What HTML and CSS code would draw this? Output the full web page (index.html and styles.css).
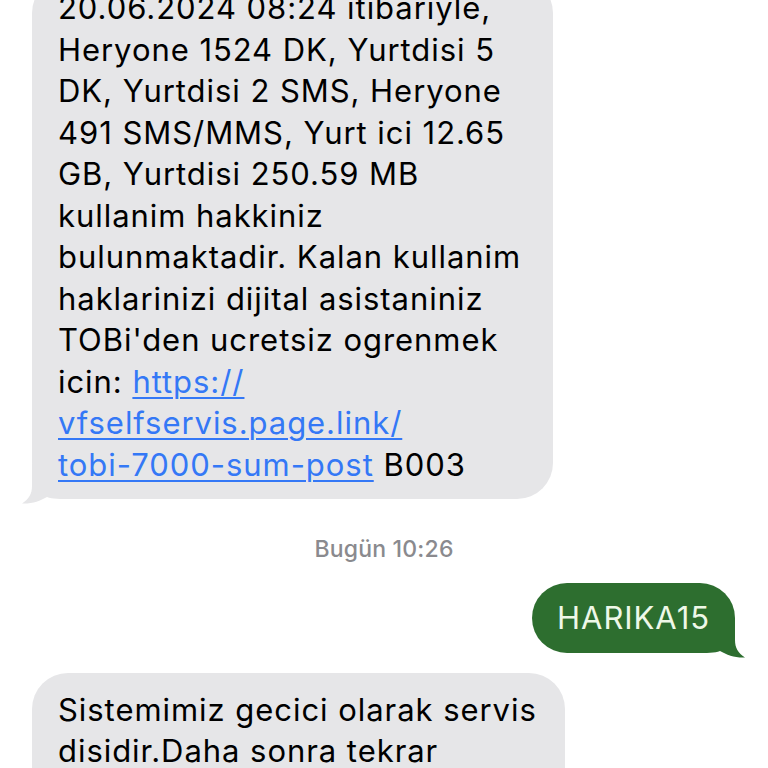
FILE: index.html
```html
<!DOCTYPE html>
<html lang="tr">
<head>
<meta charset="utf-8">
<title>Mesajlar</title>
<link rel="stylesheet" href="styles.css">
</head>
<body>
<main class="thread">
  <div class="row row-in">
    <div class="bubble bubble-in bubble-first">
      20.06.2024 08:24 itibariyle,<br>
      Heryone 1524 DK, Yurtdisi 5<br>
      DK, Yurtdisi 2 SMS, Heryone<br>
      491 SMS/MMS, Yurt ici 12.65<br>
      GB, Yurtdisi 250.59 MB<br>
      kullanim hakkiniz<br>
      bulunmaktadir. Kalan kullanim<br>
      haklarinizi dijital asistaniniz<br>
      TOBi'den ucretsiz ogrenmek<br>
      icin: <a class="link" href="#">https://<br>vfselfservis.page.link/<br>tobi-7000-sum-post</a> B003
      <svg class="tail tail-in" viewBox="0 0 50 40" width="50" height="40" aria-hidden="true"><path d="M10 0 L10 22 C10 30 7 35 0 39.5 C10 40 18 37 25 33 C30 35 38 35 50 35 L50 0 Z"/></svg>
    </div>
  </div>
  <div class="stamp"><span class="stamp-day">Bugün</span> 10:26</div>
  <div class="row row-out">
    <div class="bubble bubble-out">HARIKA15
      <svg class="tail tail-out" viewBox="0 0 50 40" width="50" height="40" aria-hidden="true"><path d="M10 0 L10 22 C10 30 7 35 0 39.5 C10 40 18 37 25 33 C30 35 38 35 50 35 L50 0 Z"/></svg>
    </div>
  </div>
  <div class="row row-in">
    <div class="bubble bubble-in bubble-last">
      Sistemimiz gecici olarak servis<br>
      disidir.Daha sonra tekrar<br>
      deneyiniz.
    </div>
  </div>
</main>
</body>
</html>
```

FILE: styles.css
```css
* { box-sizing: border-box; }
html, body {
  margin: 0;
  padding: 0;
  background: #ffffff;
  height: 768px;
  overflow: hidden;
}
body {
  font-family: Inter, "Noto Sans", "Liberation Sans", sans-serif;
  color: #000;
}
.thread {
  display: flex;
  flex-direction: column;
  padding: 0 22px 0 32px;
}
.row {
  display: flex;
}
.row-out {
  justify-content: flex-end;
  margin-top: 20px;
}
.bubble {
  position: relative;
  isolation: isolate;
  font-size: 31px;
  line-height: 41.5px;
  letter-spacing: 0.95px;
  border-radius: 36px;
}
.bubble-in {
  background: #e6e6e8;
  padding: 10px 26px 14px 26px;
}
.tail {
  position: absolute;
  bottom: -5px;
  display: block;
  z-index: -1;
}
.tail-in {
  left: -10px;
  fill: #e6e6e8;
}
.tail-out {
  right: -10px;
  transform: scaleX(-1);
  fill: #2d6e2f;
}
.bubble-first {
  width: 521px;
  margin-top: -23px;
}
.bubble-last {
  width: 533px;
  margin-top: 20px;
  padding-top: 16px;
}
.bubble-out {
  background: #2d6e2f;
  color: #eef8e8;
  padding: 14px 25px;
  border-radius: 35px;
  margin-right: 11px;
}
.link {
  color: #3478f6;
  text-decoration: underline;
  text-decoration-thickness: 2px;
  text-underline-offset: 4px;
}
.stamp {
  text-align: center;
  margin-top: 36px;
  padding-right: 10px;
  font-size: 23px;
  line-height: 28px;
  font-weight: 500;
  letter-spacing: 0.2px;
  color: #8a8a8e;
}
.stamp-day {
  font-weight: 500;
}
```
